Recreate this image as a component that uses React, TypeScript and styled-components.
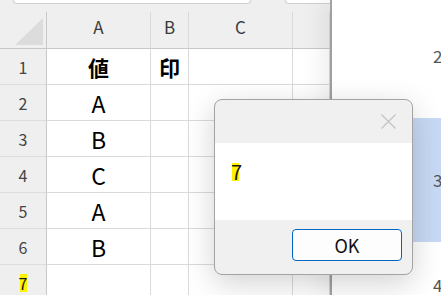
import React from 'react';
import styled, { createGlobalStyle } from 'styled-components';

const GlobalStyle = createGlobalStyle`
    body {
        margin: 0;
        font-family: "Noto Sans CJK JP", "Noto Sans", sans-serif;
        overflow: hidden;
    }
`;

const columns = ['A', 'B', 'C', ''];
const rows: Array<[string, string, string]> = [
    ['1', '値', '印'],
    ['2', 'A', ''],
    ['3', 'B', ''],
    ['4', 'C', ''],
    ['5', 'A', ''],
    ['6', 'B', ''],
    ['7', '', ''],
];

const sideRows = [
    { label: '2', height: 118, pad: 47 },
    { label: '3', height: 124, pad: 53 },
    { label: '4', height: 60, pad: 34 },
];

export default function App() {
    return <Screen>
        <GlobalStyle />
        <ExcelPane>
            <FormulaBar>
                <NameBox />
                <FormulaBox />
            </FormulaBar>
            <Sheet>
                <Corner>
                    <svg width="46" height="37" viewBox="0 0 46 37">
                        <polygon points="43,6 43,33 15,33" fill="#dcdcdc" />
                    </svg>
                </Corner>
                {columns.map((col, i) => <ColHeader key={i}>{col}</ColHeader>)}
                {rows.map(([num, a, b]) => <React.Fragment key={num}>
                    <RowHeader>
                        {num === '7' ? <Marked>7</Marked> : num}
                    </RowHeader>
                    <Cell bold={num === '1'}>{a}</Cell>
                    <Cell bold={num === '1'}>{b}</Cell>
                    <Cell />
                    <Cell />
                </React.Fragment>)}
            </Sheet>
        </ExcelPane>
        <SidePanel>
            {sideRows.map(row => <SideRow key={row.label} active={row.label === '3'}
                style={{ height: row.height, paddingTop: row.pad }}>
                {row.label}
            </SideRow>)}
        </SidePanel>
        <Dialog>
            <TitleBar>
                <svg width="15" height="15" viewBox="0 0 15 15">
                    <path d="M0.5 0.5 L14.5 14.5 M14.5 0.5 L0.5 14.5" stroke="#c2c2c2" strokeWidth="1.1" />
                </svg>
            </TitleBar>
            <Message>
                <Marked>7</Marked>
            </Message>
            <Footer>
                <OkButton>OK</OkButton>
            </Footer>
        </Dialog>
    </Screen>
}

const Screen = styled.div`
    position: relative;
    display: flex;
    width: 441px;
    height: 295px;
    overflow: hidden;
    background: #ffffff;
`;

const ExcelPane = styled.div`
    flex: none;
    width: 332px;
    box-sizing: border-box;
    border-right: 2px solid #a9a9a9;
    background: #efefef;
    display: flex;
    flex-direction: column;
`;

const FormulaBar = styled.div`
    flex: none;
    height: 12px;
    display: flex;
    align-items: flex-start;
    padding-left: 13px;
    gap: 34px;
`;

const NameBox = styled.div`
    width: 236px;
    height: 3px;
    background: #ffffff;
    border: 1px solid #cfcfcf;
    border-top: none;
    border-radius: 0 0 5px 5px;
`;

const FormulaBox = styled(NameBox)`
    width: auto;
    flex: 1;
    border-right: none;
    border-radius: 0 0 0 5px;
`;

const Sheet = styled.div`
    flex: none;
    display: grid;
    grid-template-columns: 47px 104px 38px 104px 1fr;
    grid-template-rows: 37px repeat(7, 36px);
`;

const Corner = styled.div`
    box-sizing: border-box;
    border-right: 1px solid #c8c8c8;
    border-bottom: 1px solid #c8c8c8;
    display: flex;
`;

const ColHeader = styled.div`
    box-sizing: border-box;
    border-right: 1px solid #dadada;
    border-bottom: 1px solid #c8c8c8;
    display: flex;
    align-items: center;
    justify-content: center;
    padding-bottom: 7px;
    font-size: 17px;
    color: #3a3a3a;
`;

const RowHeader = styled.div`
    box-sizing: border-box;
    border-right: 1px solid #c8c8c8;
    border-bottom: 1px solid #dcdcdc;
    display: flex;
    align-items: center;
    justify-content: center;
    font-size: 16px;
    color: #444444;
`;

const Cell = styled.div<{ bold?: boolean }>`
    box-sizing: border-box;
    background: #ffffff;
    border-right: 1px solid #dadada;
    border-bottom: 1px solid #dadada;
    display: flex;
    align-items: center;
    justify-content: center;
    font-size: ${props => props.bold ? '21px' : '23px'};
    font-weight: ${props => props.bold ? 700 : 400};
    color: #000000;
`;

const Marked = styled.span`
    display: inline-block;
    width: 7px;
    height: 18px;
    line-height: 18px;
    background: #fff200;
    text-indent: -1px;
    color: #1a1a1a;
`;

const SidePanel = styled.div`
    flex: 1;
    position: relative;
    background: #ffffff;
    box-shadow: -10px 0 22px rgba(0, 0, 0, 0.07);
`;

const SideRow = styled.div<{ active: boolean }>`
    box-sizing: border-box;
    padding-left: 101px;
    background: ${props => props.active ? '#c7d9f4' : 'transparent'};
    font-size: 17px;
    line-height: 17px;
    color: #555555;
    white-space: nowrap;
`;

const Dialog = styled.div`
    position: absolute;
    left: 214px;
    top: 99px;
    width: 199px;
    height: 176px;
    box-sizing: border-box;
    border: 1.5px solid #a3a3a3;
    border-radius: 8px;
    background: #f0f0f0;
    box-shadow: 0 8px 30px rgba(0, 0, 0, 0.18);
    display: flex;
    flex-direction: column;
    overflow: hidden;
`;

const TitleBar = styled.div`
    height: 43px;
    flex: none;
    display: flex;
    align-items: center;
    justify-content: flex-end;
    padding-right: 16px;
`;

const Message = styled.div`
    height: 77px;
    flex: none;
    box-sizing: border-box;
    display: flex;
    align-items: flex-start;
    background: #ffffff;
    padding: 20px 0 0 17px;
    font-size: 20px;
`;

const Footer = styled.div`
    flex: 1;
    display: flex;
    justify-content: flex-end;
    align-items: flex-start;
    padding: 9px 10px 0 0;
`;

const OkButton = styled.button`
    width: 110px;
    height: 32px;
    box-sizing: border-box;
    border: 1px solid #0067c0;
    border-radius: 4px;
    background: #fdfdfd;
    font-family: "Noto Sans CJK JP", "Noto Sans", sans-serif;
    font-size: 18px;
    color: #111111;
    padding: 0;
`;
